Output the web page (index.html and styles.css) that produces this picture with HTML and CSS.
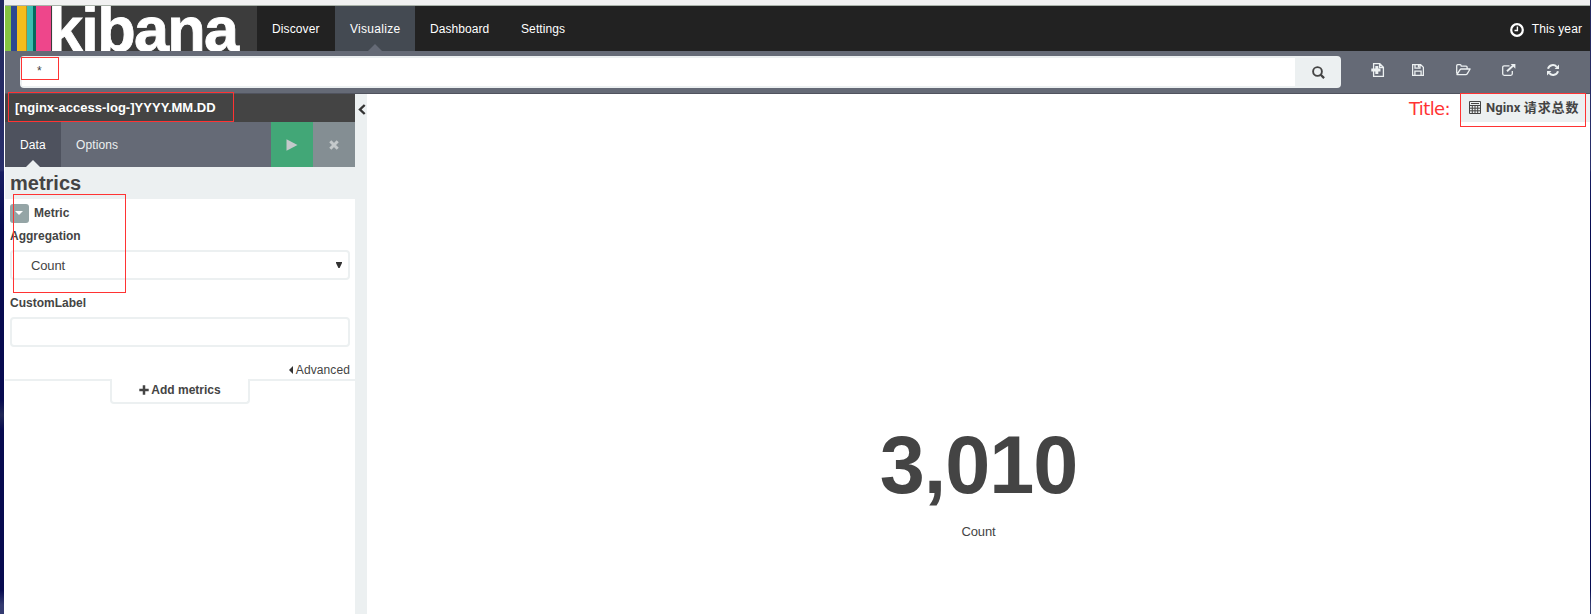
FILE: index.html
```html
<!DOCTYPE html>
<html lang="en">
<head>
<meta charset="utf-8">
<title>Kibana</title>
<link rel="stylesheet" href="styles.css">
</head>
<body>
<div class="window">
  <header class="navbar">
    <div class="logo">
      <i class="stripe green"></i><i class="stripe navy"></i><i class="stripe yellow"></i><i class="stripe teal"></i><i class="stripe pine"></i><i class="stripe pink"></i>
      <span class="wordmark">kibana</span>
    </div>
    <nav class="links">
      <a class="link discover">Discover</a>
      <a class="link current">Visualize</a>
      <a class="link dashboard">Dashboard</a>
      <a class="link settings">Settings</a>
    </nav>
    <div class="time">
      <svg width="14" height="14" viewBox="0 0 14 14" fill="none" stroke="#fff" stroke-width="2.2"><circle cx="7" cy="7" r="5.8"/><path d="M7.4 3.5v4H4.5" stroke-width="1.4"/></svg>
      <span>This year</span>
    </div>
  </header>
  <div class="toolbar">
    <div class="search">
      <div class="query">*</div>
      <div class="go"><svg width="13" height="13" viewBox="0 0 13 13" fill="none" stroke="#444" stroke-width="1.9"><circle cx="5.5" cy="5.5" r="4.4"/><path d="M8.7 8.7l3.4 3.4" stroke-width="2.3"/></svg></div>
    </div>
    <div class="actions">
      <svg class="act-new" width="14" height="14" viewBox="0 0 14 14" fill="none" stroke="#ecf0f1" stroke-width="1.3"><path d="M2.6 13.3V.7h6.2l3.6 3.5v9.1zM8.6.7v3.8h3.8"/><path d="M.3 7h9.2M5.8 3v8" stroke-width="3"/></svg>
      <svg class="act-save" width="12" height="12" viewBox="0 0 12 12" fill="none" stroke="#ecf0f1" stroke-width="1.3"><path d="M.6.6h8l2.8 2.8v8H.6zM2.9 11V7.2h6.2V11M3 .6v3.6h5V.6"/><path d="M6.6 1v2.5" stroke-width="1.6"/></svg>
      <svg class="act-open" width="15" height="12" viewBox="0 0 15 12" fill="none" stroke="#ecf0f1" stroke-width="1.3" stroke-linejoin="round"><path d="M.7 9.6V1.7q0-1 1-1h2.5q.9 0 .9 1v.4h5q1 0 1 1v1.8M.9 10.6l3-4.8q.5-.8 1.3-.8h8.9l-2.9 4.8q-.5.8-1.3.8z"/></svg>
      <svg class="act-share" width="14" height="12" viewBox="0 0 14 12" fill="none" stroke="#ecf0f1" stroke-width="1.3"><path d="M7.5 1.8H2.2q-1.5 0-1.5 1.4v6.6q0 1.5 1.5 1.5h6.6q1.5 0 1.5-1.5V7"/><path d="M8.6 0H13.4v4.8z" fill="#ecf0f1" stroke="none"/><path d="M5 7.3L11 1.8" stroke-width="1.9"/></svg>
      <svg class="act-refresh" width="12" height="12" viewBox="0 0 12 12" fill="none" stroke="#ecf0f1" stroke-width="2"><path d="M1 4.8A5 5 0 0 1 9.7 2.9M11 7.2A5 5 0 0 1 2.3 9.1"/><path d="M12 .6V5H7.6zM0 11.4V7h4.4z" fill="#ecf0f1" stroke="none"/></svg>
    </div>
  </div>
  <main class="editor">
    <aside class="sidebar">
      <div class="index">[nginx-access-log-]YYYY.MM.DD</div>
      <div class="tabs">
        <a class="tab on">Data</a>
        <a class="tab">Options</a>
        <div class="apply"><svg width="12" height="12" viewBox="0 0 12 12"><path d="M.5.3L11.5 6 .5 11.7z" fill="#c4c9cb"/></svg></div>
        <div class="discard"><svg width="10" height="10" viewBox="0 0 10 10"><path d="M1.3 1.3l7.4 7.4M8.7 1.3L1.3 8.7" stroke="#c4c9cb" stroke-width="3"/></svg></div>
      </div>
      <h2 class="group">metrics</h2>
      <div class="form">
        <div class="metric"><span class="toggle"></span><b>Metric</b></div>
        <label class="label">Aggregation</label>
        <div class="field"><span>Count</span><svg width="6" height="7" viewBox="0 0 6 7"><path d="M0 0h6v1L3.6 6H2.4L0 1z" fill="#333"/></svg></div>
        <label class="label second">CustomLabel</label>
        <div class="field"></div>
        <div class="advanced"><i class="caret"></i>Advanced</div>
      </div>
      <div class="addrow"><i class="rule"></i>
        <div class="add"><svg width="10" height="10" viewBox="0 0 10 10"><path d="M5 .3v9.4M.3 5h9.4" stroke="#444" stroke-width="2.5"/></svg>Add metrics</div>
        <i class="rule"></i></div>
    </aside>
    <div class="collapse"><svg width="8" height="11" viewBox="0 0 8 11"><path d="M6.7 1L2 5.5 6.7 10" fill="none" stroke="#333" stroke-width="2.4"/></svg></div>
    <section class="canvas">
      <div class="titlebar">
        <span class="note">Title:</span>
        <div class="title">
          <svg width="12" height="13" viewBox="0 0 12 13"><path d="M.5.5h11v12H.5zM.5 4.5h11M.5 7.2h11M.5 9.8h11M3.3 4.5v8M6 4.5v8M8.7 4.5v8M2 2.5h8" fill="none" stroke="#444"/></svg>
          <span>Nginx <span class="han">请求总数</span></span>
        </div>
      </div>
      <div class="metric-vis">
        <div class="value">3,010</div>
        <div class="caption">Count</div>
      </div>
    </section>
  </main>
</div>
<i class="mark mark-query"></i>
<i class="mark mark-index"></i>
<i class="mark mark-metric"></i>
<i class="mark mark-title"></i>
</body>
</html>
```
FILE: styles.css
```css
* { box-sizing: border-box; }
body {
  margin: 0;
  height: 614px;
  overflow: hidden;
  position: relative;
  padding: 0 1px 0 4px;
  background: linear-gradient(#23285e 0, #292f6b 170px, #171d61 172px, #070b50 230px, #070b50 400px, #202755 415px, #070b50 430px, #070b50 590px, #343b70 605px);
  font: 13px/18px "Liberation Sans", Arial, "Noto Sans CJK SC", sans-serif;
  color: #444;
}
.window {
  height: 614px;
  background: #fff;
  border-top: 5px solid #f1f1f1;
  padding-left: 1px;
  display: flex;
  flex-direction: column;
}
.navbar {
  height: 46px;
  border-top: 1px solid #a9b2a9;
  background: #222;
  display: flex;
  flex: none;
}
.logo { width: 252px; height: 45px; background: #3c3c3c; display: flex; overflow: hidden; }
.stripe { flex: none; height: 45px; }
.green { width: 6px; background: #86c440; }
.navy { width: 6px; background: #2e4791; }
.yellow { width: 10px; background: #f4bd1c; border-right: 1px solid #b98f20; }
.teal { width: 6px; background: #3bbeb1; }
.pine { width: 3px; background: #046a5e; }
.pink { width: 15px; background: #ee468b; }
.wordmark {
  font-weight: bold;
  font-size: 63px;
  line-height: 60px;
  letter-spacing: -1.7px;
  margin: -7px 0 0 -3px;
  -webkit-text-stroke: .8px #fff;
  color: #fff;
}
.links { display: flex; color: #fff; font-size: 12px; line-height: 46px; }
.link { padding: 0 15px; }
.discover { width: 78px; letter-spacing: .12px; }
.current { width: 80px; background: #444a52; position: relative; letter-spacing: .3px; }
.current::after {
  content: "";
  position: absolute;
  bottom: 0;
  left: 33px;
  border: 7px solid transparent;
  border-top: 0;
  border-bottom-color: #656a76;
}
.dashboard { width: 91px; letter-spacing: .05px; }
.settings { letter-spacing: .1px; }
.time { margin-left: auto; padding-right: 8px; display: flex; align-items: center; gap: 8px; color: #fff; font-size: 12px; letter-spacing: .1px; }
.time svg { margin-top: 3px; }
.toolbar {
  height: 43px;
  flex: none;
  background: #656a76;
  border-bottom: 1px solid #50535e;
  display: flex;
  padding: 5px 0 0 15px;
}
.search { width: 1321px; height: 32px; display: flex; background: #ecf0f1; border-radius: 4px; }
.query { width: 1273px; margin: 2px 0 2px 2px; padding-left: 15px; background: #fff; line-height: 27px; font-size: 12px; }
.go { flex: 1; display: flex; align-items: center; justify-content: center; }
.actions { height: 28px; display: flex; align-items: center; padding-left: 30px; }
.act-save { margin-left: 27px; }
.act-open { margin-left: 32px; }
.act-share { margin-left: 31px; }
.act-refresh { margin-left: 31px; }
.editor { display: flex; flex: 1; min-height: 0; }
.sidebar { width: 350px; }
.index { height: 28px; line-height: 28px; padding-left: 10px; background: #444; color: #fff; font-weight: bold; font-size: 13px; letter-spacing: .02px; }
.tabs { height: 45px; display: flex; background: #656a76; color: #ecf0f1; font-size: 12px; line-height: 46px; }
.tab { padding: 0 15px; letter-spacing: .1px; }
.on { width: 56px; background: #4e525e; color: #fff; position: relative; }
.on::after {
  content: "";
  position: absolute;
  bottom: 0;
  left: 21px;
  border: 7px solid transparent;
  border-top: 0;
  border-bottom-color: #ecf0f1;
}
.apply, .discard { width: 42px; display: flex; align-items: center; justify-content: center; }
.apply { margin-left: auto; background: #42a777; }
.discard { background: #848e93; }
.group { margin: 0; height: 32px; line-height: 33px; padding-left: 5px; background: #ecf0f1; font-size: 20px; }
.form { padding: 5px 5px 0 5px; }
.metric { display: flex; gap: 5px; font-size: 12px; line-height: 18px; height: 18px; }
.toggle { width: 19px; height: 19px; border-radius: 3px; background: #95a5a6; padding: 7px 0 0 5px; }
.toggle::after { content: ""; display: block; width: 0; border: 4px solid transparent; border-top-color: #fff; border-bottom: 0; }
.label { display: block; margin-top: 5px; font-weight: bold; font-size: 12px; line-height: 18px; height: 23px; }
.second { margin-top: 14px; }
.field {
  height: 30px;
  border: 2px solid #ecf0f1;
  border-radius: 4px;
  padding: 1px 6px 0 19px;
  display: flex;
  align-items: center;
  justify-content: space-between;
  letter-spacing: -.15px;
}
.advanced { margin-top: 14px; height: 18px; font-size: 12px; display: flex; justify-content: flex-end; align-items: center; letter-spacing: .1px; }
.caret { border: 4px solid transparent; border-right-color: #333; border-left: 0; margin-right: 3px; }
.addrow { display: flex; }
.rule { height: 2px; flex: 1; background: #ecf0f1; }
.add {
  width: 140px;
  height: 25px;
  border: 2px solid #ecf0f1;
  border-top: 0;
  border-radius: 0 0 4px 4px;
  display: flex;
  align-items: center;
  justify-content: center;
  gap: 2px;
  font-weight: bold;
  font-size: 12px;
  padding-bottom: 2px;
}
.collapse { width: 12px; background: #ecf0f1; padding: 10px 0 0 3px; }
.collapse svg { display: block; }
.canvas { flex: 1; display: flex; flex-direction: column; }
.titlebar { display: flex; justify-content: flex-end; height: 28px; }
.note { font: 18px/29px "DejaVu Sans", sans-serif; color: #f33; letter-spacing: -.6px; margin-right: 11px; }
.title { width: 129px; background: #ecf0f1; padding: 0 0 1px 8px; display: flex; align-items: center; gap: 5px; font-family: Roboto, "Noto Sans CJK SC", sans-serif; font-size: 13px; font-weight: bold; white-space: nowrap; letter-spacing: .1px; }
.han { letter-spacing: .9px; }
.metric-vis { flex: 1; padding-top: 297px; text-align: center; }
.value { font-size: 81px; line-height: 92px; font-weight: bold; letter-spacing: -1px; }
.caption { margin-top: 12px; letter-spacing: -.15px; }
.mark { position: absolute; border: 1px solid #f33; }
.mark-query { left: 21px; top: 57px; width: 38px; height: 23px; }
.mark-index { left: 8px; top: 92px; width: 226px; height: 30px; }
.mark-metric { left: 13px; top: 194px; width: 113px; height: 99px; }
.mark-title { left: 1460px; top: 93px; width: 126px; height: 34px; }
```
